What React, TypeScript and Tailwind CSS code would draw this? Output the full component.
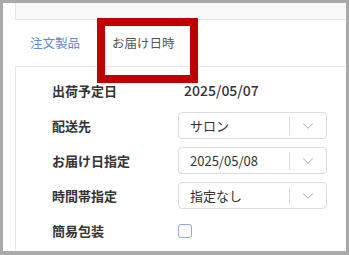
import { ChevronDown } from "lucide-react";

const font = { fontFamily: '"Noto Sans CJK JP", "Noto Sans", sans-serif' };

const Select = ({ value }: { value: string }) => (
  <div className="flex h-[27px] w-[149px] items-center rounded-[4px] border border-[#dcdcdc] bg-white">
    <span className="flex-1 pl-[11px] text-[13px] text-[#333]">{value}</span>
    <span className="h-[18px] w-px bg-[#dcdcdc]" />
    <span className="flex w-[36px] justify-center text-[#b5b5b5]">
      <ChevronDown size={18} strokeWidth={1.4} />
    </span>
  </div>
);

const rows: { label: string; node: React.ReactNode }[] = [
  {
    label: "出荷予定日",
    node: <span className="pl-[6px] text-[14px] font-medium text-[#333]">2025/05/07</span>,
  },
  { label: "配送先", node: <Select value="サロン" /> },
  { label: "お届け日指定", node: <Select value="2025/05/08" /> },
  { label: "時間帯指定", node: <Select value="指定なし" /> },
  {
    label: "簡易包装",
    node: <span className="block h-[14px] w-[14px] rounded-[3px] border-[1.5px] border-[#8da6ee]" />,
  },
];

export default function App() {
  return (
    <div
      style={font}
      className="relative h-[255px] w-[349px] overflow-hidden border-[3px] border-b-[4px] border-[#aaaaaa] bg-white"
    >
      <div className="pl-[12px]">
        <div className="h-[17px] border-b border-l border-[#e6e6e6] bg-[#f9f9f9]" />
        <div className="flex h-[46px] items-center text-[12.5px]">
          <span className="pl-[15px] text-[#5b8dcc]">注文製品</span>
          <span className="pl-[32px] text-[#555]">お届け日時</span>
        </div>
        <div className="h-[200px] border-l border-t border-[#e6e6e6] pt-[6px]">
          {rows.map((r) => (
            <div key={r.label} className="flex h-[35px] items-center">
              <span className="w-[162px] pl-[36px] text-[13px] font-bold text-[#333]">{r.label}</span>
              {r.node}
            </div>
          ))}
        </div>
      </div>
      <div className="absolute left-[94px] top-[15px] h-[65px] w-[101px] border-[8px] border-[#c00000]" />
    </div>
  );
}
